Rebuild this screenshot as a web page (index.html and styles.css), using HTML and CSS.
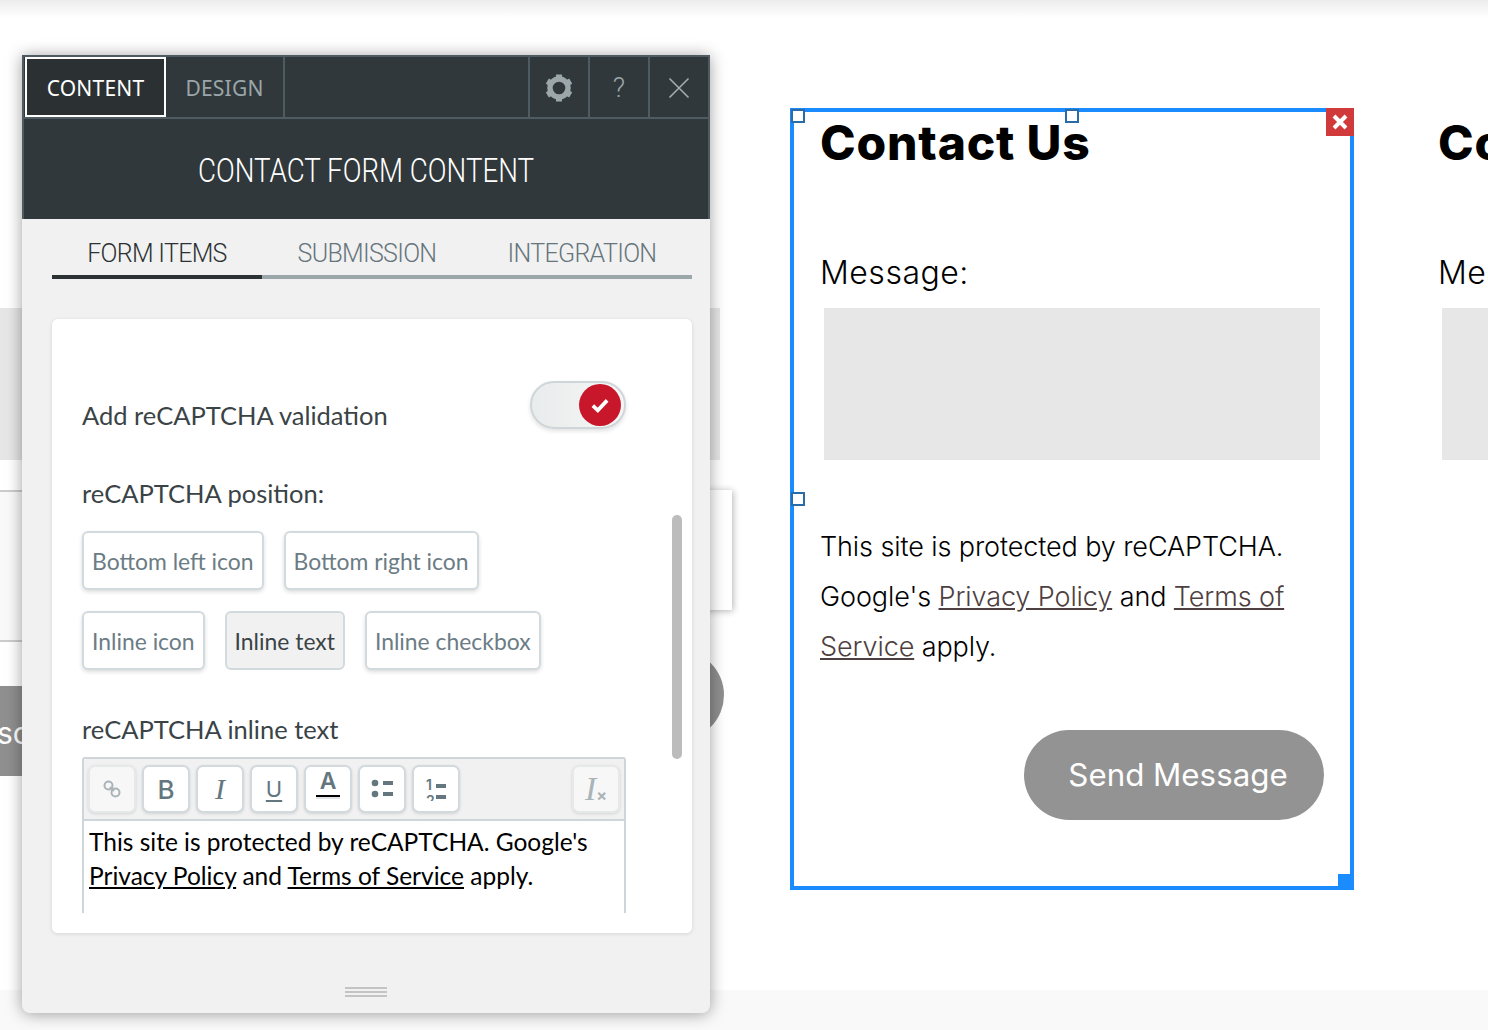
FILE: index.html
```html
<!DOCTYPE html>
<html lang="en">
<head>
<meta charset="utf-8">
<title>Contact form editor</title>
<link rel="stylesheet" href="styles.css">
</head>
<body>
<div class="stage">
  <div class="top-shade"></div>

  <div class="ghost ghost-field"></div>
  <div class="ghost ghost-input-left"></div>
  <div class="ghost ghost-input-right"></div>
  <div class="ghost ghost-button-left"><span>sc</span></div>
  <div class="ghost ghost-button-right"></div>

  <main class="form-row">
    <section class="form-card selected">
      <h1 class="form-title">Contact Us</h1>
      <p class="form-label">Message:</p>
      <div class="form-area"></div>
      <p class="form-note">This site is protected by reCAPTCHA. Google's <a href="#">Privacy Policy</a> and <a href="#">Terms of Service</a> apply.</p>
      <div class="form-actions"><button class="send">Send Message</button></div>
      <span class="handle handle-tl"></span>
      <span class="handle handle-tc"></span>
      <span class="handle handle-ml"></span>
      <span class="remove"><svg width="18" height="18" viewBox="0 0 18 18"><path d="M3 3l12 12M15 3L3 15" stroke="#fff" stroke-width="4" fill="none"/></svg></span>
      <span class="resize"></span>
    </section>
    <section class="form-card">
      <h1 class="form-title">Contact Us</h1>
      <p class="form-label">Message:</p>
      <div class="form-area"></div>
    </section>
  </main>

  <div class="bottom-band"></div>

  <aside class="panel">
    <header class="panel-head">
      <nav class="topbar">
        <a class="top-tab active">CONTENT</a>
        <a class="top-tab">DESIGN</a>
        <span class="top-spacer"></span>
        <a class="top-icon"><svg width="30" height="30" viewBox="0 0 30 30"><g stroke="#9ba7aa" fill="none"><circle cx="15" cy="15" r="9" stroke-width="5.4"/><path d="M15 1.5v5M15 23.5v5M3.3 8.2l4.3 2.5M22.4 19.3l4.3 2.5M3.3 21.8l4.3-2.5M22.4 10.7l4.3-2.5" stroke-width="6"/></g></svg></a>
        <a class="top-icon help">?</a>
        <a class="top-icon"><svg width="22" height="22" viewBox="0 0 22 22"><path d="M1.5 1.5l19 19M20.5 1.5l-19 19" stroke="#a3adb0" stroke-width="1.6" fill="none"/></svg></a>
      </nav>
      <h2 class="panel-title"><span>CONTACT FORM CONTENT</span></h2>
    </header>

    <div class="sub-tabs">
      <a class="sub-tab current">FORM ITEMS</a>
      <a class="sub-tab">SUBMISSION</a>
      <a class="sub-tab wide">INTEGRATION</a>
    </div>

    <div class="panel-card">
      <div class="toggle-row">
        <span class="field-label">Add reCAPTCHA validation</span>
        <span class="toggle"><span class="knob"><svg width="22" height="22" viewBox="0 0 20 20"><path d="M3.5 10.500l4.500 4.300 8.500-9" stroke="#fff" stroke-width="3.400" fill="none"/></svg></span></span>
      </div>
      <div class="field-label position-label">reCAPTCHA position:</div>
      <div class="choices">
        <button class="choice">Bottom left icon</button>
        <button class="choice">Bottom right icon</button>
      </div>
      <div class="choices">
        <button class="choice">Inline icon</button>
        <button class="choice on">Inline text</button>
        <button class="choice">Inline checkbox</button>
      </div>
      <div class="field-label inline-label">reCAPTCHA inline text</div>
      <div class="editor">
        <div class="toolbar">
          <button class="tool off"><svg width="22" height="22" viewBox="0 0 22 22"><g stroke="#aab4b8" stroke-width="2" fill="none"><circle cx="7.500" cy="7.500" r="4"/><circle cx="14.500" cy="14.500" r="4"/><path d="M9 9l4 4"/></g></svg></button>
          <button class="tool t-b">B</button>
          <button class="tool t-i">I</button>
          <button class="tool t-u">U</button>
          <button class="tool t-a"><span>A</span></button>
          <button class="tool"><svg width="26" height="24" viewBox="0 0 26 24"><g fill="#64767e"><circle cx="6" cy="6" r="3.300"/><circle cx="6" cy="17" r="3.300"/><rect x="14" y="4" width="10" height="4"/><rect x="14" y="15" width="10" height="4"/></g></svg></button>
          <button class="tool"><svg width="26" height="24" viewBox="0 0 26 24"><g fill="#64767e"><rect x="13" y="7" width="10" height="4"/><rect x="13" y="18" width="10" height="4"/><text x="3" y="13" class="num">1</text><text x="3" y="29" class="num">2</text></g></svg></button>
          <span class="tool-gap"></span>
          <button class="tool off t-clear"><em>I</em><small>×</small></button>
        </div>
        <div class="editor-body">This site is protected by reCAPTCHA. Google's <a href="#">Privacy Policy</a> and <a href="#">Terms of Service</a> apply.</div>
      </div>
      <span class="scrollbar"></span>
    </div>

    <footer class="panel-foot"><span class="grip"></span></footer>
  </aside>
</div>
</body>
</html>
```

FILE: styles.css
```css
* { box-sizing: border-box; }
html, body { margin: 0; padding: 0; background: #fff; }
button { font: inherit; padding: 0; cursor: pointer; }
a { color: inherit; }

.stage {
  position: relative;
  width: 1488px;
  height: 1030px;
  overflow: hidden;
  display: flex;
  flex-direction: column;
  background: #fff;
  font-family: "Inter", sans-serif;
}

.top-shade {
  height: 18px;
  flex: none;
  background: linear-gradient(#ececec, #fff);
}
.bottom-band {
  height: 40px;
  flex: none;
  margin-top: auto;
  background: #f9f9f9;
}

/* Pieces of the neighbouring form, peeking out around the floating panel */
.ghost { position: absolute; }
.ghost-field { left: -100px; top: 308px; width: 820px; height: 152px; background: #e6e6e6; }
.ghost-input-left { left: -100px; top: 490px; width: 140px; height: 152px; background: #f9f9f9; border-top: 2px solid #ccc; border-bottom: 2px solid #ccc; }
.ghost-input-right { left: 500px; top: 490px; width: 232px; height: 120px; background: #fff; box-shadow: 1px 1px 7px rgba(0,0,0,.3); }
.ghost-button-left {
  left: 0; top: 686px; width: 40px; height: 90px;
  background: #8f8f8f; color: #fff; overflow: hidden;
  font-size: 30px; line-height: 94px; white-space: nowrap;
}
.ghost-button-left span { margin-left: -3px; }
.ghost-button-right { left: 500px; top: 650px; width: 224px; height: 90px; border-radius: 45px; background: #8f8f8f; }

/* Form cards */
.form-row {
  display: flex;
  gap: 54px;
  padding: 90px 0 0 790px;
  flex: none;
}
.form-card {
  position: relative;
  flex: none;
  width: 564px;
  height: 782px;
  border: 4px solid transparent;
  padding: 0 26px;
  color: #000;
}
.form-card.selected { border-color: #1a8cff; }
.form-title {
  margin: 0;
  font-size: 48px;
  line-height: 62px;
  font-weight: 800;
  letter-spacing: .8px;
}
.form-label {
  margin: 77px 0 0;
  font-size: 32px;
  line-height: 44px;
  font-weight: 300;
  letter-spacing: .5px;
}
.form-area {
  margin: 13px 0 0 4px;
  width: 496px;
  height: 152px;
  background: #e7e7e7;
}
.form-note {
  margin: 62px 0 0;
  font-size: 27px;
  line-height: 50px;
  font-weight: 300;
  letter-spacing: -.1px;
  width: 480px;
}
.form-note a { color: #4e4040; }
.form-actions { display: flex; justify-content: flex-end; margin: 58px 0 0; width: 504px; }
.send {
  width: 300px;
  height: 90px;
  padding-left: 8px;
  border: 0;
  border-radius: 45px;
  background: #939393;
  color: #fff;
  font-family: inherit;
  font-size: 31.300px;
  font-weight: 400;
}

.handle { position: absolute; width: 14px; height: 14px; background: #fff; border: 2px solid #2a6ca8; }
.handle-tl { left: -3px; top: -3px; }
.handle-tc { left: 271px; top: -3px; }
.handle-ml { left: -3px; top: 380px; }
.remove {
  position: absolute; right: -4px; top: -4px; width: 28px; height: 28px;
  background: #d13a3a; display: flex; align-items: center; justify-content: center;
}
.resize { position: absolute; right: -4px; bottom: -4px; width: 16px; height: 16px; background: #1a8cff; }

/* Floating panel */
.panel {
  position: absolute;
  left: 22px;
  top: 55px;
  width: 688px;
  height: 958px;
  display: flex;
  flex-direction: column;
  background: #f1f1f1;
  border-radius: 0 0 8px 8px;
  box-shadow: 0 1px 16px rgba(0,0,0,.38);
  font-family: "Lato", sans-serif;
}
.panel-head {
  height: 164px;
  flex: none;
  background: #31383b;
  border: 2px solid #4e5b62;
  border-bottom: 0;
}
.topbar {
  display: flex;
  height: 62px;
  border-bottom: 2px solid #4e5b62;
}
.top-tab {
  display: flex; align-items: center; justify-content: center;
  color: #9aa6a9;
  font-family: "Noto Sans", sans-serif;
  font-size: 21px;
  letter-spacing: .2px;
  border-right: 2px solid #4e5b62;
  width: 119px;
  padding-top: 1px;
}
.top-tab.active {
  width: 141px;
  color: #fff;
  background: #2b3033;
  border: 2px solid #fff;
  margin-left: 1px;
}
.top-spacer { flex: 1; }
.top-icon {
  width: 60px;
  display: flex; align-items: center; justify-content: center;
  border-left: 2px solid #4e5b62;
  color: #9aa6a9;
  padding-top: 2px;
}
.help { font-family: "Roboto", sans-serif; font-weight: 300; font-size: 27px; }
.panel-title {
  margin: 0;
  height: 102px;
  display: flex; align-items: center; justify-content: center;
  color: #fff;
  font-family: "Roboto", sans-serif;
  font-weight: 300;
  font-size: 33px;
}
.panel-title span { display: inline-block; white-space: nowrap; transform: scaleX(.84); }

.sub-tabs {
  display: flex;
  margin: 20px 18px 0 30px;
  height: 40px;
  flex: none;
  border-bottom: 4px solid #9ba7aa;
}
.sub-tab {
  width: 210px;
  height: 40px;
  color: #66757c;
  text-align: center;
  font-family: "Roboto", sans-serif;
  font-weight: 300;
  font-size: 25px;
  line-height: 30px;
  letter-spacing: -.7px;
  white-space: nowrap;
}
.sub-tab.wide { width: 220px; }
.sub-tab.current { color: #2c3133; border-bottom: 4px solid #2c3133; }

.panel-card {
  position: relative;
  flex: none;
  margin: 40px 18px 0 30px;
  width: 640px;
  height: 614px;
  padding: 62px 66px 0 30px;
  background: #fff;
  border-radius: 6px;
  box-shadow: 0 1px 4px rgba(0,0,0,.12);
  overflow: hidden;
}
.field-label {
  color: #3a4346;
  font-size: 25.500px;
  line-height: 34px;
  font-family: "Lato", sans-serif;
}
.toggle-row { display: flex; justify-content: space-between; align-items: flex-start; }
.toggle-row .field-label { margin-top: 17px; }
.toggle {
  width: 96px; height: 48px;
  border-radius: 24px;
  border: 2px solid #ced6da;
  background: linear-gradient(90deg, #e9ecec, #f6f6f6);
  box-shadow: 0 2px 4px rgba(0,0,0,.12);
  display: flex; align-items: center; justify-content: flex-end;
  padding-right: 3px;
}
.knob {
  width: 42px; height: 42px; border-radius: 50%;
  background: #c8172a;
  display: flex; align-items: center; justify-content: center;
}
.position-label { margin-top: 44px; }
.choices { display: flex; gap: 20px; margin-top: 21px; }
.choice {
  height: 59px;
  padding: 0 8px;
  background: #fff;
  color: #6b7c85;
  border: 2px solid #d3dade;
  border-radius: 6px;
  box-shadow: 0 2px 4px rgba(0,0,0,.14);
  font-family: "Lato", sans-serif;
  font-size: 22.900px;
}
.choice.on { background: #f1f1f1; color: #3a4346; box-shadow: none; }
.inline-label { margin-top: 42px; }
.editor {
  margin-top: 11px;
  border: 2px solid #ced6da;
  border-bottom: 0;
  border-radius: 3px 3px 0 0;
  height: 260px;
  overflow: hidden;
  width: 544px;
}
.toolbar {
  display: flex;
  gap: 6px;
  height: 62px;
  padding: 6px 4px 0;
  background: #f1f1f1;
  border-bottom: 2px solid #ced6da;
}
.tool {
  width: 48px; height: 48px;
  background: #fff;
  border: 2px solid #d3dade;
  border-radius: 7px;
  box-shadow: 0 1px 3px rgba(0,0,0,.12);
  display: flex; align-items: center; justify-content: center;
  color: #64767e;
  font-family: "Inter", sans-serif;
  font-size: 24px;
}
.tool.off { background: #f7f7f7; border-color: #e6e9ea; }
.tool-gap { flex: 1; }
.t-b { font-weight: 500; font-size: 26px; }
.t-i { font-family: "Liberation Serif", serif; font-style: italic; font-size: 30px; }
.t-u { text-decoration: underline; text-underline-offset: 3px; font-size: 22px; }
.t-a { font-weight: 600; font-size: 23px; align-items: flex-start; }
.t-a span {
  display: block;
  width: 24px;
  height: 33px;
  line-height: 27px;
  text-align: center;
  margin-top: 1px;
  background: linear-gradient(#fff 27px, #000 27px, #000 29px, #dfe5e7 29px, #dfe5e7 31px, #fff 31px);
}
.num { font-size: 14px; font-weight: 600; font-family: "Inter", sans-serif; }
.t-clear { color: #aab4b8; }
.t-clear em { font-family: "Liberation Serif", serif; font-size: 34px; line-height: 1; }
.t-clear small { font-size: 16px; margin-top: 12px; font-weight: 700; }
.editor-body {
  padding: 4px 5px;
  color: #000;
  font-size: 24.500px;
  line-height: 34px;
  font-family: "Lato", sans-serif;
}
.panel-card::after {
  content: "";
  position: absolute;
  left: 0; right: 0; bottom: 0;
  height: 20px;
  background: #fff;
}
.scrollbar {
  position: absolute;
  left: 620px; top: 196px;
  width: 10px; height: 244px;
  border-radius: 5px;
  background: #bcbcbc;
}
.panel-foot {
  flex: 1;
  display: flex;
  align-items: flex-end;
  justify-content: center;
  padding: 0 0 16px;
}
.grip {
  width: 42px; height: 10px;
  border-top: 2px solid #c4c4c4;
  border-bottom: 2px solid #c4c4c4;
  position: relative;
}
.grip::after {
  content: ""; position: absolute; left: 0; right: 0; top: 2px; height: 2px; background: #c4c4c4;
}
```
